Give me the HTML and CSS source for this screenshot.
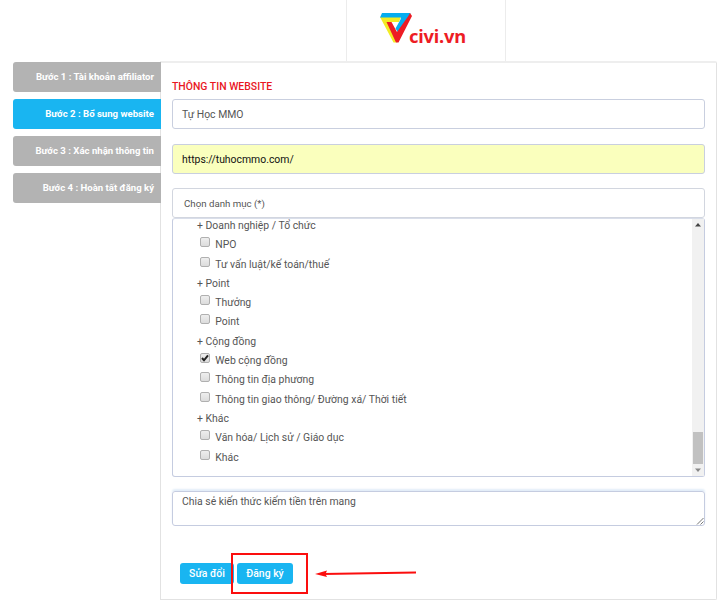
FILE: index.html
```html
<!DOCTYPE html>
<html lang="vi">
<head>
<meta charset="utf-8">
<title>civi.vn</title>
<link rel="stylesheet" href="styles.css">
</head>
<body>
<header class="header">
  <div class="brand">
    <svg class="logo" width="34" height="34" viewBox="0 0 34 34">
      <path fill="#f2ec25" d="M1 6L3.500 5.500H22L20 11H12L9 11L18.500 28.500L17.500 31.500H14.500Z"/>
      <path fill="#05adf0" d="M3 2H31.500L29.500 7L19.500 22L16.500 17.500L21.500 8.500L22 6.500H1Z"/>
      <path fill="#ed1c24" d="M31 2L33 5L19.500 31.500H17L7.500 11H12.500L18 21L29 5.500Z"/>
    </svg>
    <div class="logo-text">civi.vn</div>
  </div>
</header>
<main class="layout">
  <nav class="steps">
    <div class="step"><span>Bước 1 : Tài khoản affiliator</span></div>
    <div class="step active"><span>Bước 2 : Bổ sung website</span></div>
    <div class="step"><span>Bước 3 : Xác nhận thông tin</span></div>
    <div class="step"><span>Bước 4 : Hoàn tất đăng ký</span></div>
  </nav>
  <section class="panel">
    <h1 class="title">THÔNG TIN WEBSITE</h1>
    <div class="field">Tự Học MMO</div>
    <div class="field filled">https://tuhocmmo.com/</div>
    <div class="field category">Chọn danh mục (*)</div>
    <div class="list">
      <div class="options">
        <div class="group">+ Doanh nghiệp / Tổ chức</div>
        <div class="option"><i class="box"></i>NPO</div>
        <div class="option"><i class="box"></i>Tư vấn luật/kế toán/thuế</div>
        <div class="group">+ Point</div>
        <div class="option"><i class="box"></i>Thưởng</div>
        <div class="option"><i class="box"></i>Point</div>
        <div class="group">+ Cộng đồng</div>
        <div class="option"><i class="box"><svg class="check" width="8" height="8" viewBox="0 0 8 8"><path d="M1 4L3 6.300L7 1.300"/></svg></i>Web cộng đồng</div>
        <div class="option"><i class="box"></i>Thông tin địa phương</div>
        <div class="option"><i class="box"></i>Thông tin giao thông/ Đường xá/ Thời tiết</div>
        <div class="group">+ Khác</div>
        <div class="option"><i class="box"></i>Văn hóa/ Lịch sử / Giáo dục</div>
        <div class="option"><i class="box"></i>Khác</div>
      </div>
      <div class="scrollbar">
        <svg class="up" width="6" height="4" viewBox="0 0 6 4"><path d="M0 3.500L3 0L6 3.500Z"/></svg>
        <div class="thumb"></div>
        <svg class="down" width="6" height="4" viewBox="0 0 6 4"><path d="M0 0.500L3 4L6 0.500Z"/></svg>
      </div>
    </div>
    <div class="note">Chia sẻ kiến thức kiếm tiền trên mang
      <svg class="grip" width="8" height="8" viewBox="0 0 8 8"><path d="M1 7.500L7.500 1M4.500 7.500L7.500 4.500"/></svg>
    </div>
    <div class="actions">
      <div class="button edit">Sửa đổi</div>
      <div class="button">Đăng ký</div>
    </div>
  </section>
</main>
<div class="highlight"></div>
<svg class="arrow" width="102" height="10" viewBox="0 0 102 10"><path class="shaft" d="M8 5L101 3.500"/><path class="head" d="M0 5L12 1.500L10.500 5L12 8Z"/></svg>
</body>
</html>
```
FILE: styles.css
```css
* { box-sizing: border-box; }
body {
  margin: 0;
  width: 720px;
  height: 601px;
  overflow: hidden;
  background: #fff;
  color: #555;
  font: 10.42px/14px Roboto, "Noto Sans", sans-serif;
}
.header { height: 61px; padding-left: 346px; }
.brand {
  display: flex;
  width: 160px;
  height: 61px;
  padding: 11px 0 0 32px;
  border: solid #ececec;
  border-width: 0 1px;
}
.logo, .check { display: block; }
.logo-text {
  margin: 11px 0 0 -4px;
  color: #ed1c24;
  font: bold 18.300px/28px "Noto Sans", sans-serif;
  letter-spacing: -0.200px;
}
.layout { display: flex; padding-left: 12px; }
.steps { width: 148px; padding: 1px 0 0 1px; }
.step {
  display: flex;
  align-items: center;
  justify-content: flex-end;
  position: relative;
  width: 148px;
  height: 30px;
  margin-bottom: 7.100px;
  padding-right: 7px;
  border-radius: 3px 0 0 3px;
  background: #b3b3b3;
  color: #fff;
  font-size: 9.600px;
  font-weight: bold;
  white-space: nowrap;
}
.active { background: #19b5f1; }
.panel {
  width: 557px;
  height: 539px;
  padding: 17px 11px 0;
  border: 1px solid #e2e2e2;
  border-top: 2px solid #eee;
  border-radius: 0 2px 2px 0;
}
.title {
  margin: 0 0 5px;
  color: #e9171f;
  font-size: 10.450px;
  font-weight: 500;
  line-height: 14px;
}
.field {
  display: flex;
  align-items: center;
  height: 30px;
  margin-bottom: 15px;
  padding: 2px 9px 0;
  border: 1px solid #c9cfdf;
  border-radius: 3px;
}
.filled { background: #faffbd; color: #111; margin-bottom: 14px; }
.category { margin: 0; padding-left: 11px; font-size: 9.700px; border-color: #d2d6df; }
.list {
  display: flex;
  height: 259px;
  border: 1px solid #c5cce0;
  border-top-color: #d9deea;
  border-radius: 3px;
}
.options { flex: 1; padding-left: 24px; margin-top: -3px; }
.group, .option { height: 19.300px; line-height: 20.400px; }
.option { display: flex; padding-left: 3px; }
.box {
  width: 10px;
  height: 10px;
  margin: 2px 5.300px 0 0;
  border: 1px solid #b0b0b0;
  border-radius: 2px;
  background: linear-gradient(#eee, #dcdcdc);
}
.check path { fill: none; stroke: #222; stroke-width: 2; }
.scrollbar {
  display: flex;
  flex-direction: column;
  align-items: center;
  width: 12px;
  background: #f1f1f1;
}
.up { margin-top: 4px; fill: #444; }
.thumb { width: 10px; height: 32px; margin-top: 205px; background: #c1c1c1; }
.down { margin-top: 4px; fill: #888; }
.note {
  position: relative;
  height: 35px;
  margin-top: 14px;
  padding: 3px 9px;
  border: 1px solid #c5cce0;
  border-radius: 3px;
  box-shadow: 0 -2px 2px #e2edf8;
}
.grip { position: absolute; right: 0; bottom: 0; }
.grip path { stroke: #777; fill: none; }
.actions { display: flex; gap: 3px; padding: 37px 0 0 8px; }
.button {
  width: 56px;
  height: 21px;
  border-radius: 3px;
  background: #19b5f1;
  color: #fff;
  font-weight: 500;
  line-height: 21px;
  text-align: center;
}
.edit { width: 54px; }
.highlight {
  position: absolute;
  left: 231px;
  top: 553px;
  width: 77px;
  height: 41px;
  border: 2px solid #fb0e0e;
}
.arrow { position: absolute; left: 315px; top: 569px; }
.shaft { stroke: #fb0e0e; stroke-width: 2; }
.head { fill: #fb0e0e; }
```
